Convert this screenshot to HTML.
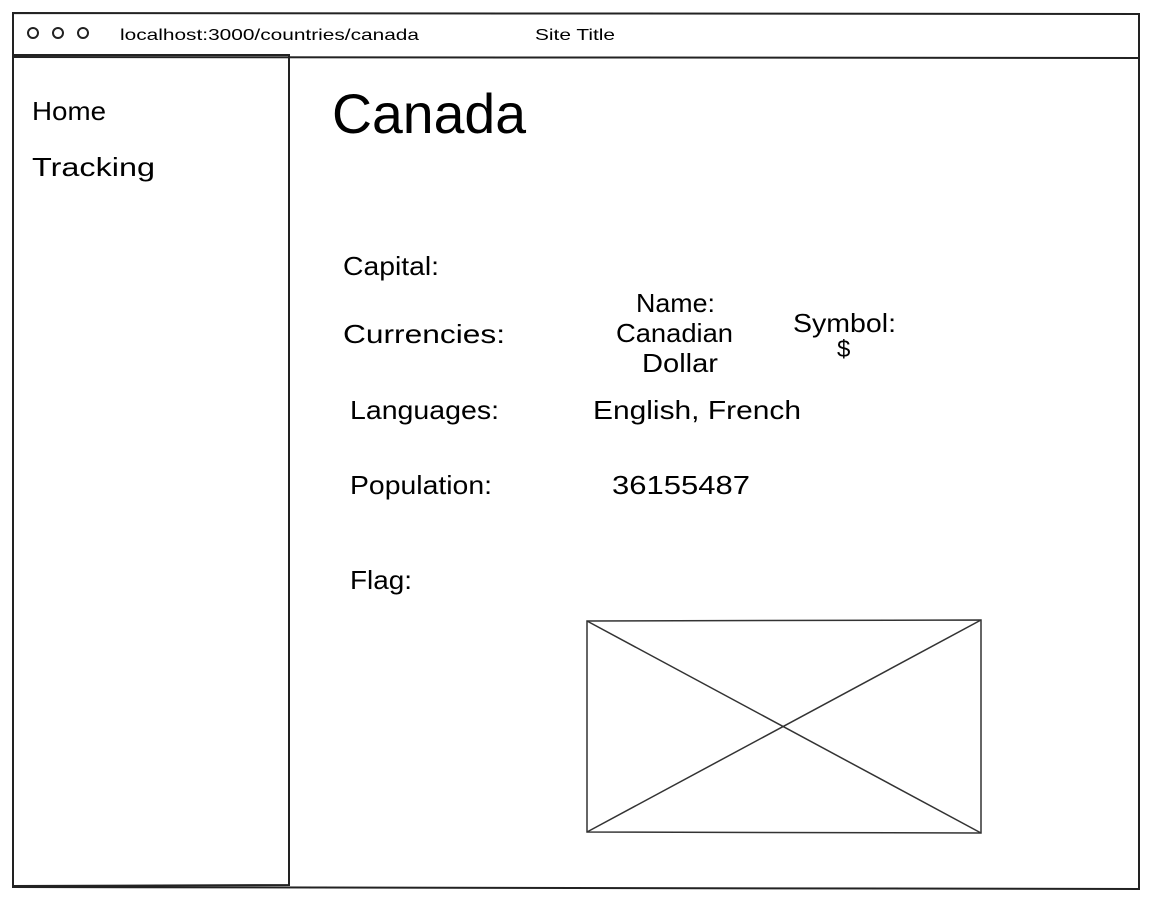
<!DOCTYPE html>
<html><head><meta charset="utf-8"><style>
html,body{margin:0;padding:0;background:#fff;width:1155px;height:906px;overflow:hidden}
svg{display:block}
text{font-family:"Liberation Sans",sans-serif;fill:#000}
</style></head><body>
<svg width="1155" height="906" viewBox="0 0 1155 906" xmlns="http://www.w3.org/2000/svg">
<g fill="none" stroke="#222" stroke-width="2">
<path d="M13 13 L1139 14 L1139 889 L13 887 Z"/>
<path d="M13 57 L1139 58"/>
<path d="M13 55 L289 55 L289 885 L13 886"/>
<circle cx="33" cy="33" r="5"/><circle cx="58" cy="33" r="5"/><circle cx="83" cy="33" r="5"/>
</g>
<g fill="none" stroke="#333" stroke-width="1.5">
<path d="M587 621 L981 620 L981 833 L587 832 Z"/>
<path d="M587 621 L981 833"/><path d="M587 832 L981 620"/>
</g>
<text x="120" y="40" font-size="16" textLength="299" lengthAdjust="spacingAndGlyphs">localhost:3000/countries/canada</text>
<text x="535" y="40" font-size="16" textLength="80" lengthAdjust="spacingAndGlyphs">Site Title</text>
<text x="32" y="120" font-size="26" textLength="74" lengthAdjust="spacingAndGlyphs">Home</text>
<text x="32" y="176" font-size="26" textLength="123" lengthAdjust="spacingAndGlyphs">Tracking</text>
<text x="332" y="133" font-size="56" textLength="194" lengthAdjust="spacingAndGlyphs">Canada</text>
<text x="343" y="275" font-size="26" textLength="96" lengthAdjust="spacingAndGlyphs">Capital:</text>
<text x="343" y="343" font-size="26" textLength="162" lengthAdjust="spacingAndGlyphs">Currencies:</text>
<text x="636" y="312" font-size="26" textLength="79" lengthAdjust="spacingAndGlyphs">Name:</text>
<text x="616" y="342" font-size="26" textLength="117" lengthAdjust="spacingAndGlyphs">Canadian</text>
<text x="642" y="372" font-size="26" textLength="76" lengthAdjust="spacingAndGlyphs">Dollar</text>
<text x="793" y="332" font-size="26" textLength="103" lengthAdjust="spacingAndGlyphs">Symbol:</text>
<text x="837" y="357" font-size="24">$</text>
<text x="350" y="419" font-size="26" textLength="149" lengthAdjust="spacingAndGlyphs">Languages:</text>
<text x="593" y="419" font-size="26" textLength="208" lengthAdjust="spacingAndGlyphs">English, French</text>
<text x="350" y="494" font-size="26" textLength="142" lengthAdjust="spacingAndGlyphs">Population:</text>
<text x="612" y="494" font-size="26" textLength="138" lengthAdjust="spacingAndGlyphs">36155487</text>
<text x="350" y="589" font-size="26" textLength="62" lengthAdjust="spacingAndGlyphs">Flag:</text>
</svg>
</body></html>
